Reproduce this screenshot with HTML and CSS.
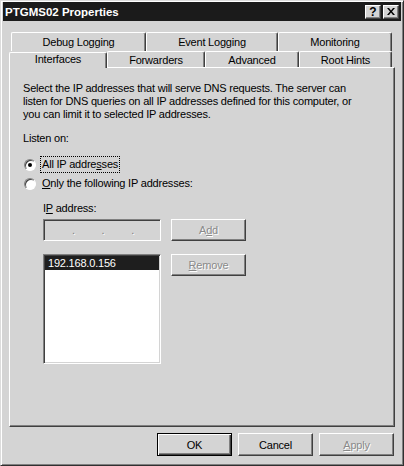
FILE: index.html
```html
<!DOCTYPE html>
<html>
<head>
<meta charset="utf-8">
<link rel="stylesheet" href="styles.css">
</head>
<body>
<div class="window">
  <div class="titlebar">
    <span class="title">PTGMS02 Properties</span>
    <div class="caption-buttons">
      <span class="cbtn help">?</span>
      <span class="cbtn close"><svg width="8" height="7" viewBox="0 0 8 7"><path d="M0 0h2l2 2.5L6 0h2L5 3.5 8 7H6L4 4.5 2 7H0l3-3.5z" fill="#000"/></svg></span>
    </div>
  </div>
  <div class="client">
    <div class="tabs">
      <div class="tab-row back">
        <div class="tab t-debug">Debug Logging</div>
        <div class="tab t-event">Event Logging</div>
        <div class="tab t-mon">Monitoring</div>
      </div>
      <div class="tab-row front">
        <div class="tab t-if selected">Interfaces</div>
        <div class="tab t-fwd">Forwarders</div>
        <div class="tab t-adv">Advanced</div>
        <div class="tab t-root">Root Hints</div>
      </div>
    </div>
    <div class="panel">
      <p class="desc">Select the IP addresses that will serve DNS requests. The server can<br>listen for DNS queries on all IP addresses defined for this computer, or<br>you can limit it to selected IP addresses.</p>
      <p class="listen">Listen on:</p>
      <div class="radio-row">
        <span class="radio checked"></span>
        <span class="rlabel focus">All IP addre<u>s</u>ses</span>
      </div>
      <div class="radio-row">
        <span class="radio"></span>
        <span class="rlabel"><u>O</u>nly the following IP addresses:</span>
      </div>
      <div class="ip-section">
        <div class="ip-label">I<u>P</u> address:</div>
        <div class="ip-grid">
          <div class="ipfield"><span class="dot">.</span><span class="dot">.</span><span class="dot">.</span></div>
          <div class="btn disabled">A<u>d</u>d</div>
          <div class="listbox">
            <div class="item selected-item">192.168.0.156</div>
          </div>
          <div class="btn disabled"><u>R</u>emove</div>
        </div>
      </div>
    </div>
    <div class="actions">
      <div class="btn default">OK</div>
      <div class="btn">Cancel</div>
      <div class="btn disabled"><u>A</u>pply</div>
    </div>
  </div>
</div>
</body>
</html>
```
FILE: styles.css
```css
* { box-sizing: border-box; }
html, body { margin: 0; padding: 0; background: #d4d4d4; }
body { font-family: "Liberation Sans", Arial, sans-serif; font-size: 11px; color: #000; letter-spacing: -0.2px; }

.window {
  width: 404px;
  height: 466px;
  background: #d4d4d4;
  border: 1px solid;
  border-color: #dcdcdc #303030 #303030 #dcdcdc;
  box-shadow: inset 1px 1px #fff, inset -1px -1px #808080;
  padding: 1px 2px;
}

.titlebar {
  height: 19px;
  background: #1b1b1b;
  display: flex;
  align-items: center;
  justify-content: space-between;
  padding: 0 2px 0 2px;
}
.title {
  color: #fff;
  font-weight: bold;
  font-size: 11.5px;
  letter-spacing: 0;
}
.caption-buttons { display: flex; gap: 2px; }
.cbtn {
  width: 16px;
  height: 14px;
  background: #d4d4d4;
  border: 1px solid;
  border-color: #fff #404040 #404040 #fff;
  box-shadow: inset -1px -1px #808080;
  display: flex;
  align-items: center;
  justify-content: center;
  font-weight: bold;
  font-size: 12px;
  line-height: 1;
  letter-spacing: 0;
}

.client { padding: 0 6px; }

.tabs { margin-top: 11px; }
.tab-row { display: flex; }
.tab-row.back { height: 19px; padding-left: 2px; }
.tab-row.front { height: 16px; align-items: flex-end; }

.tab {
  height: 100%;
  display: flex;
  align-items: center;
  justify-content: center;
  border-top: 1px solid #fff;
  border-left: 1px solid #fff;
  border-right: 1px solid #404040;
  box-shadow: inset -1px 0 #808080;
  border-radius: 2px 2px 0 0;
  background: #d4d4d4;
  padding-top: 1px;
}
.tab-row.back .tab { padding-bottom: 2px; }
.t-debug { width: 135px; }
.t-event { width: 132px; }
.t-mon { width: 114px; }
.t-if { width: 98px; }
.t-fwd { width: 98px; }
.t-adv { width: 94px; }
.t-root { width: 93px; }
.tab-row.front .tab { height: 16px; }
.tab.selected {
  height: 20px;
  margin-bottom: -1px;
  position: relative;
  z-index: 2;
  padding-bottom: 4px;
}

.panel {
  width: 386px;
  height: 360px;
  border: 1px solid;
  border-color: #fff #404040 #404040 #fff;
  box-shadow: inset -1px -1px #808080;
  padding: 14px 0 0 13px;
}
.desc { margin: 0; line-height: 13px; }
.listen { margin: 11px 0 0; line-height: 13px; }

.radio-row {
  height: 19px;
  display: flex;
  align-items: center;
  margin-left: 1px;
}
.listen + .radio-row { margin-top: 10px; }
.radio {
  width: 12px;
  height: 12px;
  border-radius: 50%;
  background: #fff;
  border: 1px solid;
  border-color: #808080 #fff #fff #808080;
  box-shadow: inset 1px 1px #404040;
  position: relative;
  flex: none;
}
.radio.checked::after {
  content: "";
  position: absolute;
  left: 3px;
  top: 3px;
  width: 4px;
  height: 4px;
  border-radius: 50%;
  background: #000;
}
.rlabel {
  margin-left: 4px;
  line-height: 13px;
  padding: 1px 1px;
  border: 1px solid transparent;
}
.rlabel.focus { border: 1px dotted #000; }

.ip-section { margin-left: 20px; }
.ip-label { margin-top: 9px; line-height: 13px; }
.ip-grid {
  margin-top: 4px;
  display: grid;
  grid-template-columns: 118px 75px;
  grid-template-rows: 22px 110px;
  column-gap: 10px;
  row-gap: 13px;
  align-items: start;
}
.ipfield {
  height: 22px;
  border: 1px solid;
  border-color: #808080 #fff #fff #808080;
  box-shadow: inset 1px 1px #404040, inset -1px -1px #d4d4d4;
  display: flex;
  justify-content: space-between;
  padding: 0 26px 0 28px;
  align-items: center;
}
.dot { color: #808080; text-shadow: 1px 1px #fff; line-height: 1; }
.listbox {
  height: 110px;
  background: #fff;
  border: 1px solid;
  border-color: #808080 #fff #fff #808080;
  box-shadow: inset 1px 1px #404040, inset -1px -1px #d4d4d4;
  padding: 1px 1px;
}
.item { height: 14px; line-height: 14px; padding-left: 3px; }
.selected-item { background: #1e1e1e; color: #fff; }

.btn {
  width: 75px;
  height: 22px;
  border: 1px solid;
  border-color: #fff #404040 #404040 #fff;
  box-shadow: inset -1px -1px #808080;
  display: flex;
  align-items: center;
  justify-content: center;
  background: #d4d4d4;
}
.btn.disabled { color: #8a8a8a; text-shadow: 1px 1px #fff; }
.btn.default {
  border: 1px solid #000;
  box-shadow: inset 1px 1px #fff, inset -1px -1px #404040, inset -2px -2px #808080;
}

.actions {
  margin-top: 6px;
  display: flex;
  justify-content: flex-end;
  gap: 6px;
  padding-right: 1px;
}
.actions .btn { height: 23px; }
```
